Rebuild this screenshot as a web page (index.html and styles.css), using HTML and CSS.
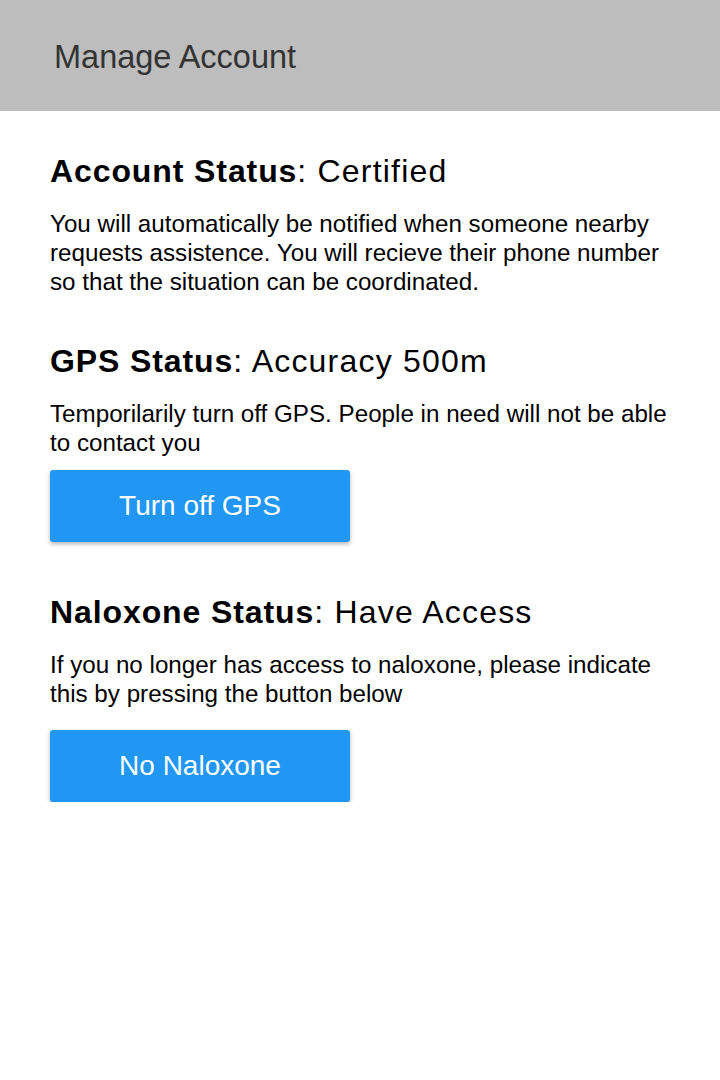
FILE: index.html
```html
<!DOCTYPE html>
<html>
<head>
<meta charset="utf-8">
<link rel="stylesheet" href="styles.css">
</head>
<body>
<header class="topbar">
  <h1 class="title">Manage Account</h1>
</header>
<main class="content">
  <section class="section">
    <h2 class="heading"><strong>Account Status</strong>: Certified</h2>
    <p class="desc">You will automatically be notified when someone nearby requests assistence. You will recieve their phone number so that the situation can be coordinated.</p>
  </section>
  <section class="section">
    <h2 class="heading"><strong>GPS Status</strong>: Accuracy 500m</h2>
    <p class="desc">Temporilarily turn off GPS. People in need will not be able to contact you</p>
    <button class="btn btn-gps">Turn off GPS</button>
  </section>
  <section class="section section-last">
    <h2 class="heading"><strong>Naloxone Status</strong>: Have Access</h2>
    <p class="desc">If you no longer has access to naloxone, please indicate this by pressing the button below</p>
    <button class="btn btn-nal">No Naloxone</button>
  </section>
</main>
</body>
</html>
```

FILE: styles.css
```css
html, body {
  margin: 0;
  padding: 0;
  background: #ffffff;
  font-family: "Liberation Sans", Arial, Helvetica, sans-serif;
  color: #000;
}
.topbar {
  height: 111px;
  background: #bdbdbd;
  display: flex;
  align-items: center;
  padding: 0 54px;
  box-sizing: border-box;
}
.title {
  margin: 0;
  font-weight: 400;
  font-size: 32.5px;
  color: #333333;
  line-height: 40px;
  position: relative;
  top: 1px;
}
.content {
  padding: 40px 46px 0 50px;
  display: flex;
  flex-direction: column;
}
.section {
  display: flex;
  flex-direction: column;
  align-items: flex-start;
}
.section + .section {
  margin-top: 45px;
}
.section-last.section {
  margin-top: 50px;
}
.heading {
  margin: 0;
  font-size: 32px;
  letter-spacing: 1.2px;
  line-height: 40px;
  font-weight: 400;
}
.heading strong {
  font-weight: 700;
  letter-spacing: 0.9px;
}
.desc {
  margin: 18px 0 0 0;
  font-size: 24.2px;
  line-height: 29px;
}
.btn {
  width: 300px;
  height: 72px;
  border: none;
  border-radius: 3px;
  background: #2196f3;
  color: #ffffff;
  font-family: "Liberation Sans", Arial, Helvetica, sans-serif;
  font-size: 28px;
  box-shadow: 0 2px 4px rgba(0,0,0,0.3);
  padding: 0;
}
.btn-gps {
  margin-top: 13px;
}
.btn-nal {
  margin-top: 22px;
}
```
